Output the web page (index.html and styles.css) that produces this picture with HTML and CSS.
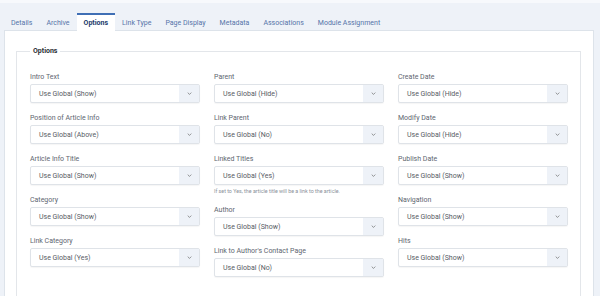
FILE: index.html
```html
<!DOCTYPE html>
<html lang="en">
<head>
  <meta charset="UTF-8" />
  <title>Edit Article - Options</title>
  <link rel="stylesheet" href="styles.css">
</head>
<body>

  <!-- Tabs -->
  <div class="tabs">
    <span class="tab">Details</span>
    <span class="tab">Archive</span>
    <span class="tab active">Options</span>
    <span class="tab">Link Type</span>
    <span class="tab">Page Display</span>
    <span class="tab">Metadata</span>
    <span class="tab">Associations</span>
    <span class="tab">Module Assignment</span>
  </div>

  <!-- Panel -->
  <div class="panel">
    <fieldset class="options">
      <legend>Options</legend>
      <div class="grid">

        <div class="col">
          <div class="field">
            <label>Intro Text</label>
            <div class="select"><span>Use Global (Show)</span><i class="caret"></i></div>
          </div>
          <div class="field">
            <label>Position of Article Info</label>
            <div class="select"><span>Use Global (Above)</span><i class="caret"></i></div>
          </div>
          <div class="field">
            <label>Article Info Title</label>
            <div class="select"><span>Use Global (Show)</span><i class="caret"></i></div>
          </div>
          <div class="field">
            <label>Category</label>
            <div class="select"><span>Use Global (Show)</span><i class="caret"></i></div>
          </div>
          <div class="field">
            <label>Link Category</label>
            <div class="select"><span>Use Global (Yes)</span><i class="caret"></i></div>
          </div>
        </div>

        <div class="col">
          <div class="field">
            <label>Parent</label>
            <div class="select"><span>Use Global (Hide)</span><i class="caret"></i></div>
          </div>
          <div class="field">
            <label>Link Parent</label>
            <div class="select"><span>Use Global (No)</span><i class="caret"></i></div>
          </div>
          <div class="field">
            <label>Linked Titles</label>
            <div class="select"><span>Use Global (Yes)</span><i class="caret"></i></div>
            <small class="help">If set to Yes, the article title will be a link to the article.</small>
          </div>
          <div class="field">
            <label>Author</label>
            <div class="select"><span>Use Global (Show)</span><i class="caret"></i></div>
          </div>
          <div class="field">
            <label>Link to Author's Contact Page</label>
            <div class="select"><span>Use Global (No)</span><i class="caret"></i></div>
          </div>
        </div>

        <div class="col">
          <div class="field">
            <label>Create Date</label>
            <div class="select"><span>Use Global (Hide)</span><i class="caret"></i></div>
          </div>
          <div class="field">
            <label>Modify Date</label>
            <div class="select"><span>Use Global (Hide)</span><i class="caret"></i></div>
          </div>
          <div class="field">
            <label>Publish Date</label>
            <div class="select"><span>Use Global (Show)</span><i class="caret"></i></div>
          </div>
          <div class="field">
            <label>Navigation</label>
            <div class="select"><span>Use Global (Show)</span><i class="caret"></i></div>
          </div>
          <div class="field">
            <label>Hits</label>
            <div class="select"><span>Use Global (Show)</span><i class="caret"></i></div>
          </div>
        </div>

      </div>
    </fieldset>
  </div>

</body>
</html>
```

FILE: styles.css
```css
* { box-sizing: border-box; }
body {
  margin: 0;
  height: 296px;
  overflow: hidden;
  font-family: Roboto, "Noto Sans", sans-serif;
  background: #eef2f8;
  border-top: 3px solid #f7f9fc;
  color: #495057;
}

/* Tabs */
.tabs {
  display: flex;
  margin: 10px 0 0 4px;
  height: 17px;
}
.tab {
  padding: 0 7px;
  font-size: 7px;
  line-height: 16px;
  color: #5574a8;
  border-top: 2px solid transparent;
}
.tab.active {
  background: #fff;
  border-top-color: #3f6fb5;
  color: #1c3b6b;
  font-weight: bold;
  position: relative;
  z-index: 1;
  height: 18px;
}

/* Panel */
.panel {
  margin: 0 6px 0 4px;
  background: #fff;
  border: 1px solid #dde3ea;
  padding: 15px 12px 0 11px;
  height: 300px;
}
.options {
  margin: 0;
  border: 1px solid #e3e6ea;
  padding: 16px 12px 0 13px;
  height: 300px;
}
.options legend {
  padding: 0 3px;
  font-size: 7px;
  line-height: 10px;
  font-weight: bold;
  color: #2a2f35;
}

.grid {
  display: grid;
  grid-template-columns: repeat(3, 170px);
  gap: 14px;
}
.col {
  display: flex;
  flex-direction: column;
  gap: 10px;
}
.field label {
  display: block;
  font-size: 7px;
  line-height: 10px;
  margin-bottom: 2px;
  color: #5e6670;
}
.select {
  display: flex;
  align-items: center;
  height: 19px;
  border: 1px solid #dfe3e8;
  border-radius: 2px;
  background: #fff;
  font-size: 7px;
  color: #575d65;
  box-shadow: 0 1px 1px rgba(0,0,0,0.04);
}
.select span {
  flex: 1;
  padding-left: 8px;
}
.caret {
  width: 20px;
  height: 100%;
  background: #eef2f8 no-repeat center/5px 3px;
  background-image: url("data:image/svg+xml,%3Csvg xmlns='http://www.w3.org/2000/svg' viewBox='0 0 6 4'%3E%3Cpath d='M0.6 0.8 L3 3.2 L5.4 0.8' fill='none' stroke='%23666' stroke-width='0.9'/%3E%3C/svg%3E");
}
.help {
  display: block;
  margin-top: 2px;
  font-size: 5.3px;
  line-height: 8px;
  color: #8a9099;
}
```
